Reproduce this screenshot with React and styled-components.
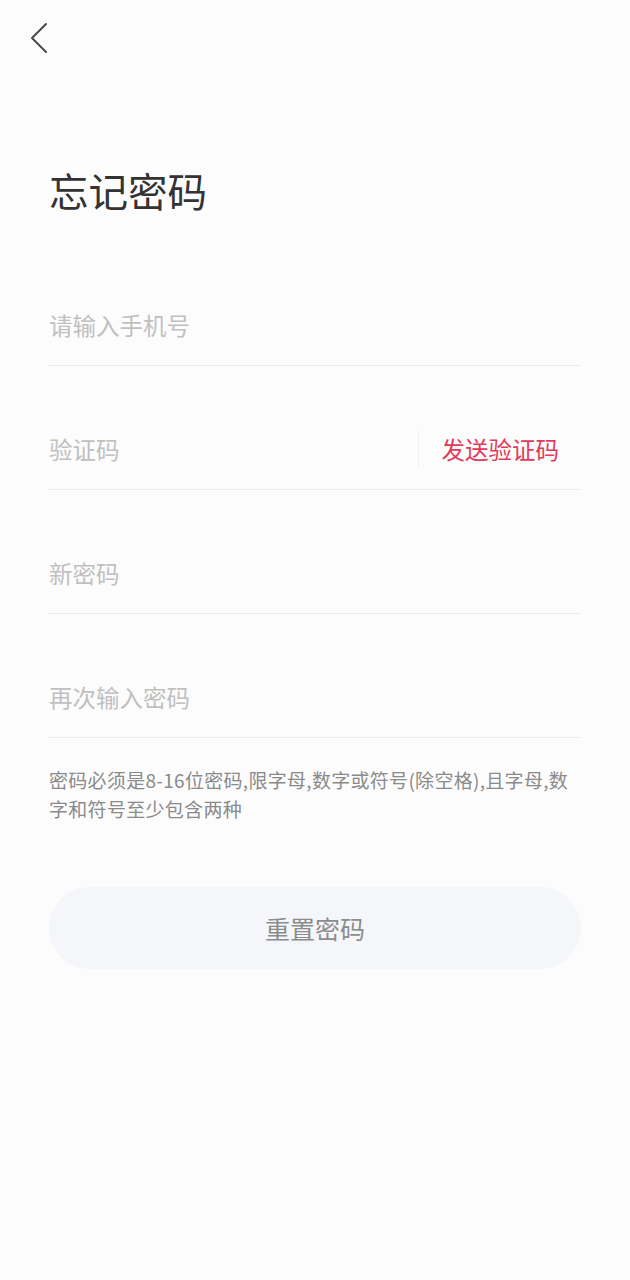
import React from 'react'
import styled, { createGlobalStyle } from 'styled-components'

const GlobalStyle = createGlobalStyle`
  html, body {
    margin: 0;
    padding: 0;
    background: #fcfcfc;
  }
  body {
    font-family: "Noto Sans CJK SC", "Noto Sans", sans-serif;
  }
`

const Page = styled.div`
  min-height: 1280px;
  background: #fcfcfc;
  display: flex;
  flex-direction: column;
`

const Header = styled.div`
  height: 76px;
  padding-left: 26px;
  display: flex;
  align-items: flex-start;
`

const BackButton = styled.button`
  margin-top: 20px;
  width: 26px;
  height: 36px;
  padding: 0;
  border: none;
  background: transparent;
  display: flex;
  align-items: center;
  justify-content: center;
  cursor: pointer;
`

const Content = styled.div`
  padding: 0 49px;
  display: flex;
  flex-direction: column;
`

const Title = styled.h1`
  margin: 94px 0 0;
  font-size: 39.5px;
  line-height: 39px;
  font-weight: 400;
  color: #333;
`

const Form = styled.div`
  margin-top: 75px;
  display: flex;
  flex-direction: column;
  gap: 42px;
`

const Field = styled.div`
  height: 81px;
  display: flex;
  align-items: center;
  border-bottom: 1px solid #ececec;
`

const Input = styled.input`
  flex: 1;
  min-width: 0;
  border: none;
  outline: none;
  background: transparent;
  padding: 0;
  font-family: inherit;
  font-size: 23.5px;
  color: #333;
  &::placeholder {
    color: #c0c0c0;
  }
`

const CodeButton = styled.button`
  border: none;
  border-left: 1px solid #f0f0f0;
  background: transparent;
  height: 36px;
  padding: 0 22px 0 23px;
  font-family: inherit;
  font-size: 23.5px;
  color: #e3395a;
  cursor: pointer;
`

const Hint = styled.p`
  margin: 27px 0 0;
  font-size: 19px;
  line-height: 29px;
  letter-spacing: 0.3px;
  color: #8a8a8a;
`

const SubmitButton = styled.button`
  margin-top: 64px;
  height: 82px;
  border: none;
  border-radius: 41px;
  background: #f5f6fa;
  font-family: inherit;
  font-size: 25px;
  color: #8c8c8c;
  cursor: pointer;
`

const ChevronLeft = () => (
  <svg width="20" height="32" viewBox="0 0 20 32" fill="none">
    <path d="M17 2L3 16l14 14" stroke="#4a4a4a" strokeWidth="2" strokeLinecap="round" strokeLinejoin="round" />
  </svg>
)

const App = () => {
  return (
    <Page>
      <GlobalStyle />
      <Header>
        <BackButton aria-label="返回">
          <ChevronLeft />
        </BackButton>
      </Header>
      <Content>
        <Title>忘记密码</Title>
        <Form>
          <Field>
            <Input type="tel" placeholder="请输入手机号" />
          </Field>
          <Field>
            <Input placeholder="验证码" />
            <CodeButton>发送验证码</CodeButton>
          </Field>
          <Field>
            <Input type="password" placeholder="新密码" />
          </Field>
          <Field>
            <Input type="password" placeholder="再次输入密码" />
          </Field>
        </Form>
        <Hint>密码必须是8-16位密码,限字母,数字或符号(除空格),且字母,数字和符号至少包含两种</Hint>
        <SubmitButton>重置密码</SubmitButton>
      </Content>
    </Page>
  )
}

export default App
